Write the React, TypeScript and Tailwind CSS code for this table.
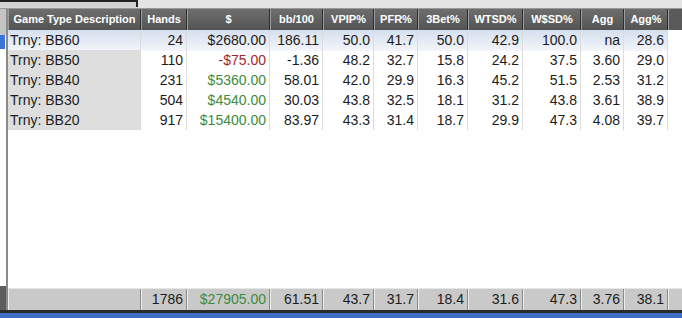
const cols =
  "grid grid-cols-[133px_46px_83px_53px_51px_44px_50px_55px_58px_43px_44px_1fr]";

type Row = {
  name: string;
  hands: string;
  amt: string;
  tone: "green" | "red" | "plain";
  stats: string[];
};

const headers = [
  "Game Type Description",
  "Hands",
  "$",
  "bb/100",
  "VPIP%",
  "PFR%",
  "3Bet%",
  "WTSD%",
  "W$SD%",
  "Agg",
  "Agg%",
];

const rows: Row[] = [
  { name: "Trny: BB60", hands: "24", amt: "$2680.00", tone: "plain", stats: ["186.11", "50.0", "41.7", "50.0", "42.9", "100.0", "na", "28.6"] },
  { name: "Trny: BB50", hands: "110", amt: "-$75.00", tone: "red", stats: ["-1.36", "48.2", "32.7", "15.8", "24.2", "37.5", "3.60", "29.0"] },
  { name: "Trny: BB40", hands: "231", amt: "$5360.00", tone: "green", stats: ["58.01", "42.0", "29.9", "16.3", "45.2", "51.5", "2.53", "31.2"] },
  { name: "Trny: BB30", hands: "504", amt: "$4540.00", tone: "green", stats: ["30.03", "43.8", "32.5", "18.1", "31.2", "43.8", "3.61", "38.9"] },
  { name: "Trny: BB20", hands: "917", amt: "$15400.00", tone: "green", stats: ["83.97", "43.3", "31.4", "18.7", "29.9", "47.3", "4.08", "39.7"] },
];

const totals = ["1786", "$27905.00", "61.51", "43.7", "31.7", "18.4", "31.6", "47.3", "3.76", "38.1"];

const toneClass = {
  green: "text-[#3d8c3d]",
  red: "text-[#a3272b]",
  plain: "text-[#1c1c1c]",
};

function BodyRow({ row, selected }: { row: Row; selected: boolean }) {
  const bg = selected ? "bg-gradient-to-b from-[#d5dfee] to-[#f3f6fa]" : "";
  const cell = "flex items-center justify-end pr-[3px] border-r border-[#dcdcdc]";
  return (
    <div className={`${cols} h-[20px] ${selected ? "border-b-2 border-[#1a1a1a]" : ""}`}>
      <div className={`flex items-center pl-[2px] border-r border-[#dcdcdc] ${selected ? bg : "bg-[#dedede]"}`}>
        {row.name}
      </div>
      <div className={`${cell} ${bg}`}>{row.hands}</div>
      <div className={`${cell} ${bg} ${toneClass[row.tone]}`}>{row.amt}</div>
      {row.stats.map((s, i) => (
        <div key={i} className={`${cell} ${bg}`}>
          {s}
        </div>
      ))}
      <div className="bg-white" />
    </div>
  );
}

export default function App() {
  return (
    <div className="w-[682px] h-[318px] overflow-hidden bg-white flex flex-col font-['Liberation_Sans',Arial,sans-serif] text-[14px] text-[#1c1c1c]">
      {/* top strip */}
      <div className="h-[9px] flex bg-[#d8d8d8] border-b border-[#9a9a9a]">
        <div className="w-[138px] h-[7px] border-t-2 border-r-2 border-[#222] bg-[#d2d2d2]" />
        <div className="flex-1 bg-[#e4e4e4]" />
      </div>

      <div className="flex flex-1 min-h-0">
        {/* left strip */}
        <div className="w-[8px] flex flex-col border-r-2 border-[#8a8a8a]">
          <div className="h-[26px] bg-[#c4c4c4]" />
          <div className="h-[14px] w-[5px] bg-[#3b73d6]" />
          <div className="flex-1 bg-white" />
          <div className="h-[24px] bg-[#5e5e5e]" />
        </div>

        {/* grid */}
        <div className="flex-1 flex flex-col min-w-0">
          <div className={`${cols} h-[21px] bg-gradient-to-b from-[#6e6e6e] to-[#545454] text-white font-bold text-[11px] leading-none`}>
            {headers.map((h) => (
              <div key={h} className="flex items-center justify-center border-l border-[#9c9c9c] border-r border-r-[#2e2e2e] whitespace-nowrap">
                {h}
              </div>
            ))}
            <div className="border-l border-[#9c9c9c] bg-[#5a5a5a]" />
          </div>

          {rows.map((r, i) => (
            <BodyRow key={r.name} row={r} selected={i === 0} />
          ))}

          <div className="flex-1 bg-white" />

          <div className={`${cols} h-[22px] bg-[#c9c9c9] border-t border-[#e6e6e6]`}>
            <div className="border-r border-[#8c8c8c] border-l border-l-[#ececec]" />
            {totals.map((t, i) => (
              <div
                key={i}
                className={`flex items-center justify-end pr-[3px] border-r border-[#8c8c8c] border-l border-l-[#ececec] ${i === 1 ? "text-[#3d8c3d]" : ""}`}
              >
                {t}
              </div>
            ))}
            <div className="border-l border-[#ececec]" />
          </div>
        </div>
      </div>

      {/* bottom bar */}
      <div className="h-[3px] bg-[#2a2a2a]" />
      <div className="h-[5px] bg-[#3f6fc4]" />
    </div>
  );
}
